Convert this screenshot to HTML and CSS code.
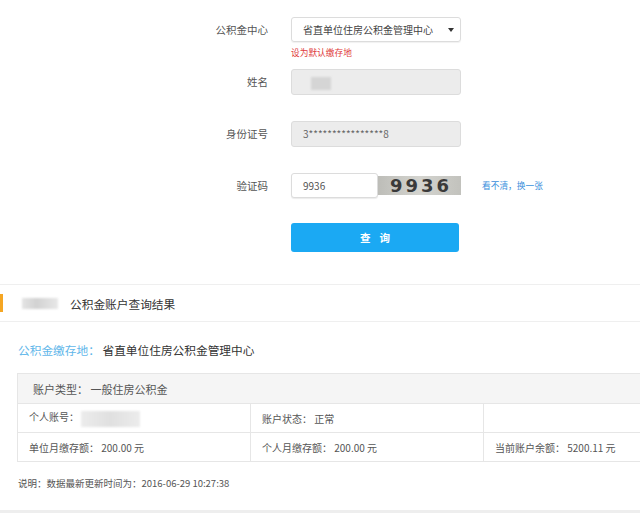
FILE: index.html
```html
<!DOCTYPE html>
<html lang="zh-CN">
<head>
    <meta charset="UTF-8">
    <meta name="viewport" content="width=device-width, initial-scale=1.0">
    <title>公积金查询</title>
    <link rel="stylesheet" href="styles.css">
</head>
<body>

    <div class="query-form">
        <!-- 公积金中心 -->
        <div class="form-row">
            <div class="form-label">公积金中心</div>
            <div class="form-field">
                <div class="select-box">省直单位住房公积金管理中心<span class="caret"></span></div>
                <div class="hint">设为默认缴存地</div>
            </div>
        </div>

        <div class="form-row row-name">
            <div class="form-label">姓名</div>
            <div class="form-field">
                <div class="input-box disabled"><span class="blur name-blur"></span></div>
            </div>
        </div>

        <div class="form-row row-id">
            <div class="form-label">身份证号</div>
            <div class="form-field">
                <div class="input-box disabled">3****************8</div>
            </div>
        </div>

        <div class="form-row row-code">
            <div class="form-label">验证码</div>
            <div class="form-field code-field">
                <div class="input-box code-input">9936</div>
                <div class="captcha">9936</div>
                <a class="refresh-link" href="#">看不清，换一张</a>
            </div>
        </div>

        <div class="form-row row-submit">
            <div class="form-label"></div>
            <div class="form-field">
                <button class="query-button">查询</button>
            </div>
        </div>
    </div>

    <div class="result">
        <div class="result-title">
            <span class="title-bar"></span>
            <span class="blur title-blur"></span>
            <span class="title-text">公积金账户查询结果</span>
        </div>

        <div class="location">
            <span class="location-label">公积金缴存地：</span>
            <span class="location-value">省直单位住房公积金管理中心</span>
        </div>

        <div class="table-wrap">
            <table class="account-table">
                <colgroup>
                    <col class="col-wide">
                    <col class="col-wide">
                    <col class="col-rest">
                </colgroup>
                <tr class="table-head">
                    <td colspan="3">账户类型：&nbsp;一般住房公积金</td>
                </tr>
                <tr>
                    <td>个人账号：<span class="blur account-blur"></span></td>
                    <td>账户状态：&nbsp;正常</td>
                    <td></td>
                </tr>
                <tr>
                    <td>单位月缴存额：&nbsp;200.00 元</td>
                    <td>个人月缴存额：&nbsp;200.00 元</td>
                    <td>当前账户余额：&nbsp;5200.11 元</td>
                </tr>
            </table>
        </div>

        <div class="note">说明：数据最新更新时间为：2016-06-29 10:27:38</div>
    </div>

    <div class="bottom-strip"></div>

</body>
</html>
```

FILE: styles.css
```css
body {
    font-family: "Noto Sans CJK SC", "Noto Sans", sans-serif;
    background-color: white;
    color: #444;
    margin: 0;
    padding: 0;
    width: 640px;
    overflow: hidden;
}

.query-form {
    padding-top: 17px;
}

.form-row {
    display: flex;
}

.form-label {
    width: 268px;
    margin-right: 23px;
    text-align: right;
    font-size: 10.5px;
    color: #555;
    line-height: 25px;
}

.form-field {
    width: 170px;
}

.row-name {
    margin-top: 9px;
}

.row-id {
    margin-top: 26px;
}

.row-code {
    margin-top: 26px;
}

.row-submit {
    margin-top: 25px;
}

.select-box {
    position: relative;
    box-sizing: border-box;
    height: 25px;
    line-height: 23px;
    border: 1px solid #dcdcdc;
    border-radius: 3px;
    box-shadow: 0 1px 1px rgba(0, 0, 0, 0.06);
    padding-left: 11px;
    font-size: 10px;
    color: #444;
}

.caret {
    position: absolute;
    right: 6px;
    top: 10px;
    border-left: 3px solid transparent;
    border-right: 3px solid transparent;
    border-top: 4px solid #333;
}

.hint {
    margin-top: 4px;
    font-size: 8.7px;
    line-height: 14px;
    color: #e03a3a;
}

.input-box {
    box-sizing: border-box;
    height: 26px;
    line-height: 24px;
    border: 1px solid #dcdcdc;
    border-radius: 3px;
    padding-left: 11px;
    font-size: 10px;
    color: #555;
}

.input-box.disabled {
    background-color: #ececec;
    color: #666;
}

.code-field {
    display: flex;
    align-items: center;
    width: 260px;
}

.code-input {
    width: 87px;
    height: 25px;
    background-color: white;
    box-shadow: 0 1px 1px rgba(0, 0, 0, 0.08);
}

.captcha {
    width: 83px;
    height: 19px;
    line-height: 19px;
    background: linear-gradient(90deg, #bdbdb8, #d4d4cf 50%, #c2c2bd);
    font-family: "DejaVu Sans", sans-serif;
    font-weight: bold;
    font-size: 18px;
    letter-spacing: 3px;
    text-indent: 3px;
    color: #3a3a3a;
    text-align: center;
}

.refresh-link {
    margin-left: 21px;
    font-size: 8.7px;
    color: #3b8fdc;
    text-decoration: none;
}

.query-button {
    display: block;
    width: 168px;
    height: 29px;
    background-color: #1ba9f3;
    color: white;
    font-family: "Noto Sans CJK SC", sans-serif;
    font-size: 10.5px;
    font-weight: bold;
    letter-spacing: 9px;
    text-indent: 9px;
    border: none;
    border-radius: 3px;
    cursor: pointer;
}

.blur {
    display: inline-block;
    background: linear-gradient(90deg, #e4e4e4, #d2d2d2 40%, #e8e8e8);
    filter: blur(1px);
}

.name-blur {
    width: 20px;
    height: 13px;
    margin-left: 8px;
    vertical-align: middle;
    background: #d5d5d5;
}

.result {
    margin-top: 32px;
    border-top: 1px solid #efefef;
}

.result-title {
    display: flex;
    align-items: center;
    height: 36px;
    border-bottom: 1px solid #efefef;
}

.title-bar {
    width: 3px;
    height: 18px;
    background-color: #f5a623;
}

.title-blur {
    width: 36px;
    height: 11px;
    margin-left: 19px;
}

.title-text {
    margin-left: 12px;
    font-size: 11.7px;
    color: #333;
}

.location {
    padding: 20px 0 0 18px;
    line-height: 16px;
    font-size: 11.7px;
}

.location-label {
    color: #62b7ea;
}

.location-value {
    color: #333;
}

.table-wrap {
    margin-top: 15px;
    padding-left: 17px;
}

.account-table {
    border-collapse: collapse;
    width: 640px;
    table-layout: fixed;
}

.col-wide {
    width: 233px;
}

.account-table td {
    border: 1px solid #e6e6e6;
    height: 28px;
    padding: 0 0 0 11px;
    font-size: 10px;
    color: #555;
    white-space: nowrap;
}

.account-table .table-head td {
    background-color: #f5f5f5;
    padding-left: 15px;
    font-size: 11px;
    height: 29px;
}

.account-blur {
    width: 59px;
    height: 16px;
    vertical-align: middle;
    margin-left: 2px;
    background: linear-gradient(90deg, #ececec, #e0e0e0 50%, #ececec);
}

.note {
    margin: 14px 0 0 18px;
    font-size: 9.5px;
    line-height: 14px;
    color: #555;
}

.bottom-strip {
    margin-top: 20px;
    height: 10px;
    background-color: #eeeeee;
}
```
